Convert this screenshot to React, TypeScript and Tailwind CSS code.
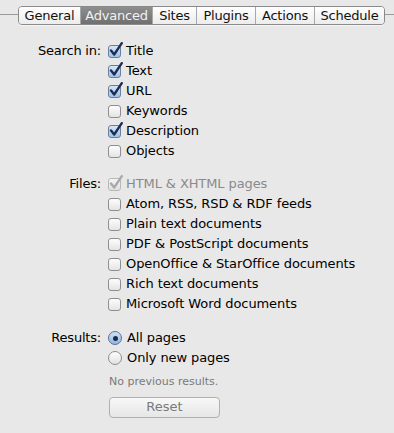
import { ReactNode } from 'react';

const font = { fontFamily: '"Lucida Grande", "DejaVu Sans", sans-serif' };

const tabs = ['General', 'Advanced', 'Sites', 'Plugins', 'Actions', 'Schedule'];
const tabWidths = ['w-[61px]', 'w-[72px]', 'w-[44px]', 'w-[59px]', 'w-[59px]', 'w-[70px]'];

function Check({ checked, disabled }: { checked?: boolean; disabled?: boolean }) {
  return (
    <span className="relative inline-block w-[13px] h-[13px] shrink-0">
      <span
        className={
          'absolute inset-0 rounded-[3px] border ' +
          (disabled
            ? 'border-[#b8b8b8] bg-gradient-to-b from-[#f4f4f4] to-[#e0e0e0]'
            : checked
              ? 'border-[#6d7e98] bg-gradient-to-b from-[#d6e6f8] to-[#9fc1ea]'
              : 'border-[#8e8e8e] bg-gradient-to-b from-[#fdfdfd] to-[#e4e4e4]')
        }
      />
      {checked && (
        <svg className="absolute left-[1px] top-[-3px]" width="14" height="15" viewBox="0 0 14 15">
          <path
            d="M2 8.5 L5.2 12.5 L12.8 1.2"
            fill="none"
            stroke={disabled ? '#a9a9a9' : '#1b2f55'}
            strokeWidth="2.4"
            strokeLinecap="round"
            strokeLinejoin="round"
          />
        </svg>
      )}
    </span>
  );
}

function Radio({ on }: { on?: boolean }) {
  return (
    <span
      className={
        'relative inline-flex items-center justify-center w-[14px] h-[14px] rounded-full border shrink-0 ' +
        (on
          ? 'border-[#5b6f90] bg-gradient-to-b from-[#cfe2f7] to-[#8fb6e6]'
          : 'border-[#8e8e8e] bg-gradient-to-b from-[#fdfdfd] to-[#e2e2e2]')
      }
    >
      {on && <span className="w-[5px] h-[5px] rounded-full bg-[#1b2a45]" />}
    </span>
  );
}

function Row({ label, children }: { label?: string; children: ReactNode }) {
  return (
    <div className="flex h-[20px] items-center">
      <div className="w-[108px] text-right pr-[7px] text-[13px] text-black tracking-[-0.2px]">{label}</div>
      <div className="flex items-center gap-[5px] text-[13px] tracking-[-0.1px]">{children}</div>
    </div>
  );
}

export default function App() {
  const search: [string, boolean][] = [
    ['Title', true],
    ['Text', true],
    ['URL', true],
    ['Keywords', false],
    ['Description', true],
    ['Objects', false],
  ];
  const files = [
    'Atom, RSS, RSD & RDF feeds',
    'Plain text documents',
    'PDF & PostScript documents',
    'OpenOffice & StarOffice documents',
    'Rich text documents',
    'Microsoft Word documents',
  ];

  return (
    <div className="w-[394px] h-[433px] bg-[#e8e8e8] overflow-hidden" style={font}>
      <div className="relative flex justify-start pt-[6px] pl-[18px]">
        <div className="absolute left-0 right-0 top-[14px] h-px bg-[#9a9a9a]" />
        <div className="relative flex h-[19px] rounded-[4px] border border-[#8a8a8a] overflow-hidden shadow-[0_1px_0_rgba(255,255,255,0.6)]">
          {tabs.map((t, i) => (
            <div
              key={t}
              className={
                'flex items-center justify-center text-[13px] leading-none tracking-[-0.2px] ' +
                tabWidths[i] +
                (i > 0 ? ' border-l border-[#a8a8a8]' : '') +
                (t === 'Advanced'
                  ? ' bg-gradient-to-b from-[#8e8e8e] to-[#707070] text-[#f2f2f2]'
                  : ' bg-gradient-to-b from-[#ffffff] to-[#ececec] text-[#111]')
              }
            >
              {t}
            </div>
          ))}
        </div>
      </div>

      <div className="pt-[16px]">
        {search.map(([name, c], i) => (
          <Row key={name} label={i === 0 ? 'Search in:' : undefined}>
            <Check checked={c} />
            <span>{name}</span>
          </Row>
        ))}
      </div>

      <div className="pt-[13px]">
        <Row label="Files:">
          <Check checked disabled />
          <span className="text-[#8a8a8a]">HTML &amp; XHTML pages</span>
        </Row>
        {files.map((f) => (
          <Row key={f}>
            <Check />
            <span>{f}</span>
          </Row>
        ))}
      </div>

      <div className="pt-[14px]">
        <Row label="Results:">
          <Radio on />
          <span>All pages</span>
        </Row>
        <Row>
          <Radio />
          <span>Only new pages</span>
        </Row>
        <div className="pl-[109px] pt-[6px] text-[11px] text-[#7a7a7a]">No previous results.</div>
        <div className="pl-[109px] pt-[6px]">
          <div className="w-[111px] h-[21px] rounded-[4px] border border-[#b0b0b0] bg-gradient-to-b from-[#f8f8f8] to-[#e6e6e6] flex items-center justify-center text-[13px] text-[#7a7a7a]">
            Reset
          </div>
        </div>
      </div>
    </div>
  );
}
